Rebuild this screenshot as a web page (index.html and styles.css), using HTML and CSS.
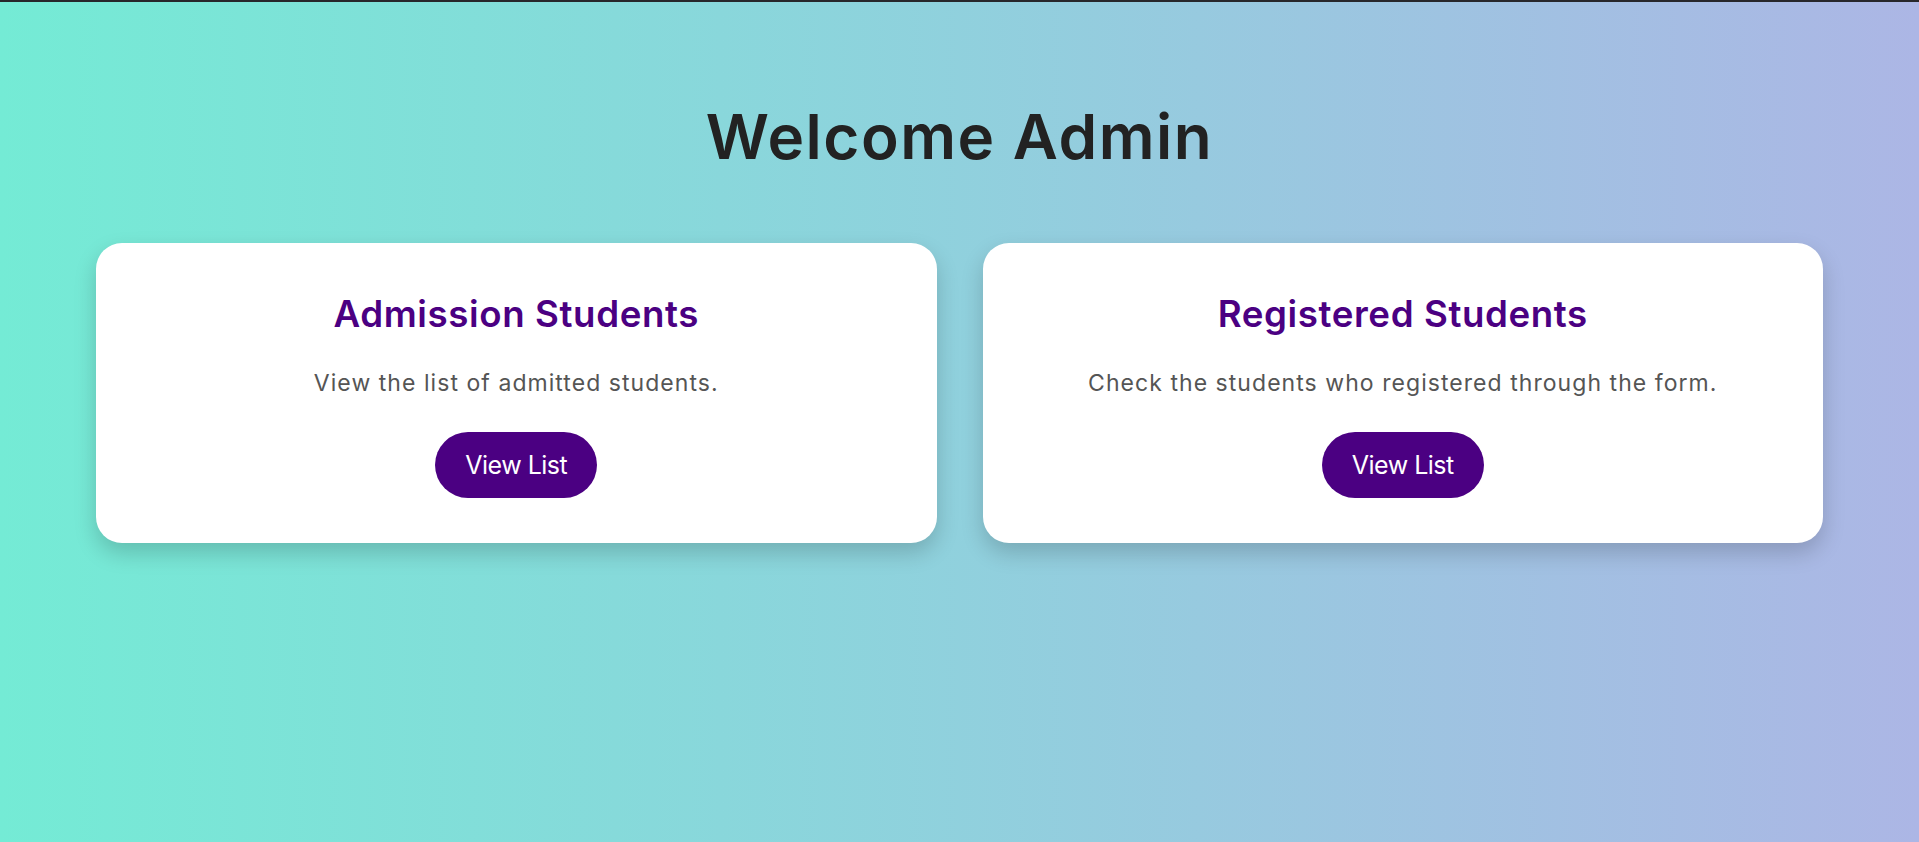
FILE: index.html
```html
<!DOCTYPE html>
<html lang="en">
<head>
<meta charset="UTF-8">
<title>Admin Dashboard</title>
<link rel="stylesheet" href="styles.css">
</head>
<body>
  <h1 class="welcome">Welcome Admin</h1>
  <div class="cards">
    <div class="card">
      <h2 class="card-title">Admission Students</h2>
      <p class="card-text">View the list of admitted students.</p>
      <a class="btn" href="#">View List</a>
    </div>
    <div class="card">
      <h2 class="card-title">Registered Students</h2>
      <p class="card-text">Check the students who registered through the form.</p>
      <a class="btn" href="#">View List</a>
    </div>
  </div>
</body>
</html>
```
FILE: styles.css
```css
html, body {
  margin: 0;
  padding: 0;
}
body {
  min-height: 842px;
  box-sizing: border-box;
  border-top: 2px solid #27272b;
  background: linear-gradient(to right, #74ebd5, #acb6e5);
  font-family: "Inter", "Open Sans", sans-serif;
}
.welcome {
  margin: 104px 0 75px;
  text-align: center;
  font-size: 62px;
  line-height: 62px;
  font-weight: 600;
  letter-spacing: 1.5px;
  color: #222;
}
.cards {
  display: grid;
  grid-template-columns: 1fr 1fr;
  gap: 46px;
  padding: 0 96px;
}
.card {
  background: #fff;
  border-radius: 26px;
  box-shadow: 0 10px 22px rgba(0, 0, 0, 0.18);
  height: 300px;
  box-sizing: border-box;
  padding: 53px 20px 45px;
  display: flex;
  flex-direction: column;
  align-items: center;
  text-align: center;
}
.card-title {
  margin: 0;
  font-size: 36.7px;
  line-height: 36.7px;
  font-weight: 600;
  letter-spacing: 0.6px;
  color: #4b0082;
}
.card-text {
  margin: 39px 0 37px;
  font-size: 23px;
  line-height: 23px;
  letter-spacing: 1.05px;
  color: #555;
}
.btn {
  display: inline-block;
  height: 66px;
  line-height: 66px;
  padding: 0 30px;
  border-radius: 33px;
  background: #4b0082;
  color: #fff;
  text-decoration: none;
  font-size: 25px;
  letter-spacing: -0.5px;
}
```
